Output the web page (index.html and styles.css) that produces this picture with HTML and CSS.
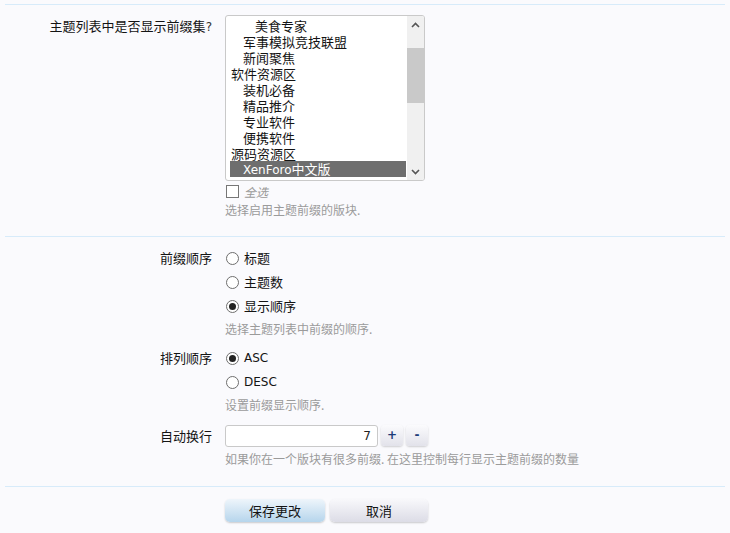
FILE: index.html
```html
<!DOCTYPE html>
<html lang="zh-CN">
<head>
<meta charset="utf-8">
<title>前缀选项</title>
<link rel="stylesheet" href="styles.css">
</head>
<body>
<form class="xenForm">
  <fieldset class="section">
    <dl class="ctrlUnit">
      <dt class="label">主题列表中是否显示前缀集<span class="q">?</span></dt>
      <dd class="ctrl">
        <div class="listbox">
          <ul class="options">
            <li class="lvl2">美食专家</li>
            <li class="lvl1">军事模拟竞技联盟</li>
            <li class="lvl1">新闻聚焦</li>
            <li class="lvl0">软件资源区</li>
            <li class="lvl1">装机必备</li>
            <li class="lvl1">精品推介</li>
            <li class="lvl1">专业软件</li>
            <li class="lvl1">便携软件</li>
            <li class="lvl0">源码资源区</li>
            <li class="lvl1 selected"><span class="latin">XenForo</span>中文版</li>
          </ul>
          <div class="scrollbar">
            <span class="arrow up"><svg width="9" height="6" viewBox="0 0 9 6"><path d="M1 5 L4.5 1.5 L8 5" fill="none" stroke="#555" stroke-width="1.6"/></svg></span>
            <span class="track"><span class="thumb"></span></span>
            <span class="arrow down"><svg width="9" height="6" viewBox="0 0 9 6"><path d="M1 1 L4.5 4.5 L8 1" fill="none" stroke="#555" stroke-width="1.6"/></svg></span>
          </div>
        </div>
        <label class="checkAll"><span class="box"></span><em>全选</em></label>
        <p class="explain">选择启用主题前缀的版块.</p>
      </dd>
    </dl>
  </fieldset>

  <fieldset class="section options2">
    <dl class="ctrlUnit">
      <dt class="label">前缀顺序</dt>
      <dd class="ctrl">
        <ul class="radios">
          <li><span class="radio"></span>标题</li>
          <li><span class="radio"></span>主题数</li>
          <li><span class="radio on"></span>显示顺序</li>
        </ul>
        <p class="explain">选择主题列表中前缀的顺序.</p>
      </dd>
    </dl>
    <dl class="ctrlUnit">
      <dt class="label">排列顺序</dt>
      <dd class="ctrl">
        <ul class="radios">
          <li><span class="radio on"></span><span class="latin">ASC</span></li>
          <li><span class="radio"></span><span class="latin">DESC</span></li>
        </ul>
        <p class="explain">设置前缀显示顺序.</p>
      </dd>
    </dl>
    <dl class="ctrlUnit lastUnit">
      <dt class="label wrapLabel">自动换行</dt>
      <dd class="ctrl">
        <div class="spinbox">
          <span class="numInput latin">7</span>
          <span class="spinBtn latin">+</span>
          <span class="spinBtn latin">-</span>
        </div>
        <p class="explain">如果你在一个版块有很多前缀. 在这里控制每行显示主题前缀的数量</p>
      </dd>
    </dl>
  </fieldset>

  <div class="submitUnit">
    <span class="button primary">保存更改</span>
    <span class="button">取消</span>
  </div>
</form>
</body>
</html>
```

FILE: styles.css
```css
html, body {
  margin: 0;
  background: #fafafd;
}

body {
  font-family: "Noto Sans CJK SC", "DejaVu Sans", sans-serif;
  font-size: 13px;
  color: #141414;
  width: 730px;
  height: 533px;
  overflow: hidden;
}

.latin {
  font-family: "DejaVu Sans", "Noto Sans CJK SC", sans-serif;
  font-size: 12px;
}

.xenForm {
  padding: 4px 5px 0;
}

.section {
  margin: 0;
  padding: 0;
  border: 0;
  border-top: 1px solid #d7ebfa;
}

.ctrlUnit {
  display: flex;
  margin: 0;
}

.label {
  width: 207px;
  flex: none;
  text-align: right;
  line-height: 16px;
}

.q {
  color: #333;
  font-family: "DejaVu Sans", sans-serif;
  font-size: 12px;
}

.ctrl {
  margin: 0 0 0 13px;
  flex: 1;
}

/* forum list box */
.section:first-child .ctrlUnit {
  padding-top: 10px;
}

.section:first-child .label {
  padding-top: 3px;
}

.listbox {
  width: 198px;
  height: 164px;
  border: 1px solid #c9c9c9;
  border-radius: 3px;
  background: #fff;
  display: flex;
  overflow: hidden;
}

.options {
  list-style: none;
  margin: 0;
  padding: 2px 0 0 4px;
  flex: 1;
}

.options li {
  height: 16px;
  line-height: 16px;
  white-space: nowrap;
}

.options .lvl0 { padding-left: 1px; }
.options .lvl1 { padding-left: 13px; }
.options .lvl2 { padding-left: 25px; }

.options .selected {
  background: #6e6e6e;
  color: #fff;
  margin-top: -1px;
  margin-right: 1px;
}

.scrollbar {
  width: 17px;
  background: #f0f0f0;
  display: flex;
  flex-direction: column;
}

.arrow {
  height: 17px;
  display: flex;
  align-items: center;
  justify-content: center;
}

.track {
  flex: 1;
  position: relative;
}

.thumb {
  position: absolute;
  left: 0;
  right: 0;
  top: 15px;
  height: 55px;
  background: #c9c9c9;
}

.checkAll {
  display: flex;
  align-items: center;
  height: 16px;
  margin-top: 2px;
}

.box {
  width: 11px;
  height: 11px;
  border: 1px solid #767676;
  background: #fff;
  margin: 0 5px 0 1px;
}

.checkAll em {
  color: #9a9a9a;
  font-size: 12px;
}

.explain {
  margin: 3px 0 0;
  font-size: 12px;
  color: #9b9b9b;
  line-height: 16px;
}

.section:first-child .explain {
  padding-bottom: 18px;
}

/* prefix ordering options */
.options2 .ctrlUnit:first-child {
  padding-top: 13px;
}

.radios {
  list-style: none;
  margin: 0;
  padding: 0 0 4px;
}

.radios li {
  display: flex;
  align-items: center;
  height: 16px;
  margin-bottom: 8px;
  line-height: 16px;
}

.radios li:last-child {
  margin-bottom: 0;
}

.radio {
  width: 11px;
  height: 11px;
  border: 1px solid #6e6e6e;
  border-radius: 50%;
  background: #fff;
  margin: 0 5px 0 1px;
  position: relative;
}

.radio.on::after {
  content: "";
  position: absolute;
  left: 2px;
  top: 2px;
  width: 7px;
  height: 7px;
  border-radius: 50%;
  background: #222;
}

.ctrlUnit + .ctrlUnit {
  margin-top: 13px;
}

.ctrlUnit.lastUnit {
  margin-top: 12px;
  padding-bottom: 19px;
}

.wrapLabel {
  padding-top: 3px;
}

/* spinner */
.spinbox {
  display: flex;
  gap: 3px;
  height: 22px;
}

.numInput {
  width: 145px;
  height: 20px;
  border: 1px solid #c9c9c9;
  border-radius: 3px;
  background: #fff;
  text-align: right;
  padding-right: 6px;
  line-height: 21px;
  color: #222;
}

.spinBtn {
  width: 22px;
  height: 21px;
  border-radius: 4px;
  background: linear-gradient(#fbfbfd, #e2e2ea);
  box-shadow: 0 1px 2px rgba(0, 0, 0, 0.18);
  text-align: center;
  line-height: 20px;
  color: #1d3c78;
  font-weight: bold;
}

.lastUnit .explain {
  margin-top: 4px;
}

/* submit row */
.submitUnit {
  border-top: 1px solid #d7ebfa;
  padding: 12px 0 0 220px;
  display: flex;
  gap: 5px;
}

.button {
  width: 100px;
  height: 23px;
  border-radius: 5px;
  text-align: center;
  line-height: 23px;
  font-size: 13px;
  color: #141414;
  background: linear-gradient(#f8f8fb, #dcdce6);
  box-shadow: 0 1px 2px rgba(0, 0, 0, 0.2);
}

.button.primary {
  background: linear-gradient(#eef5fb, #b6d5ec);
}

.button + .button {
  width: 98px;
}
```
